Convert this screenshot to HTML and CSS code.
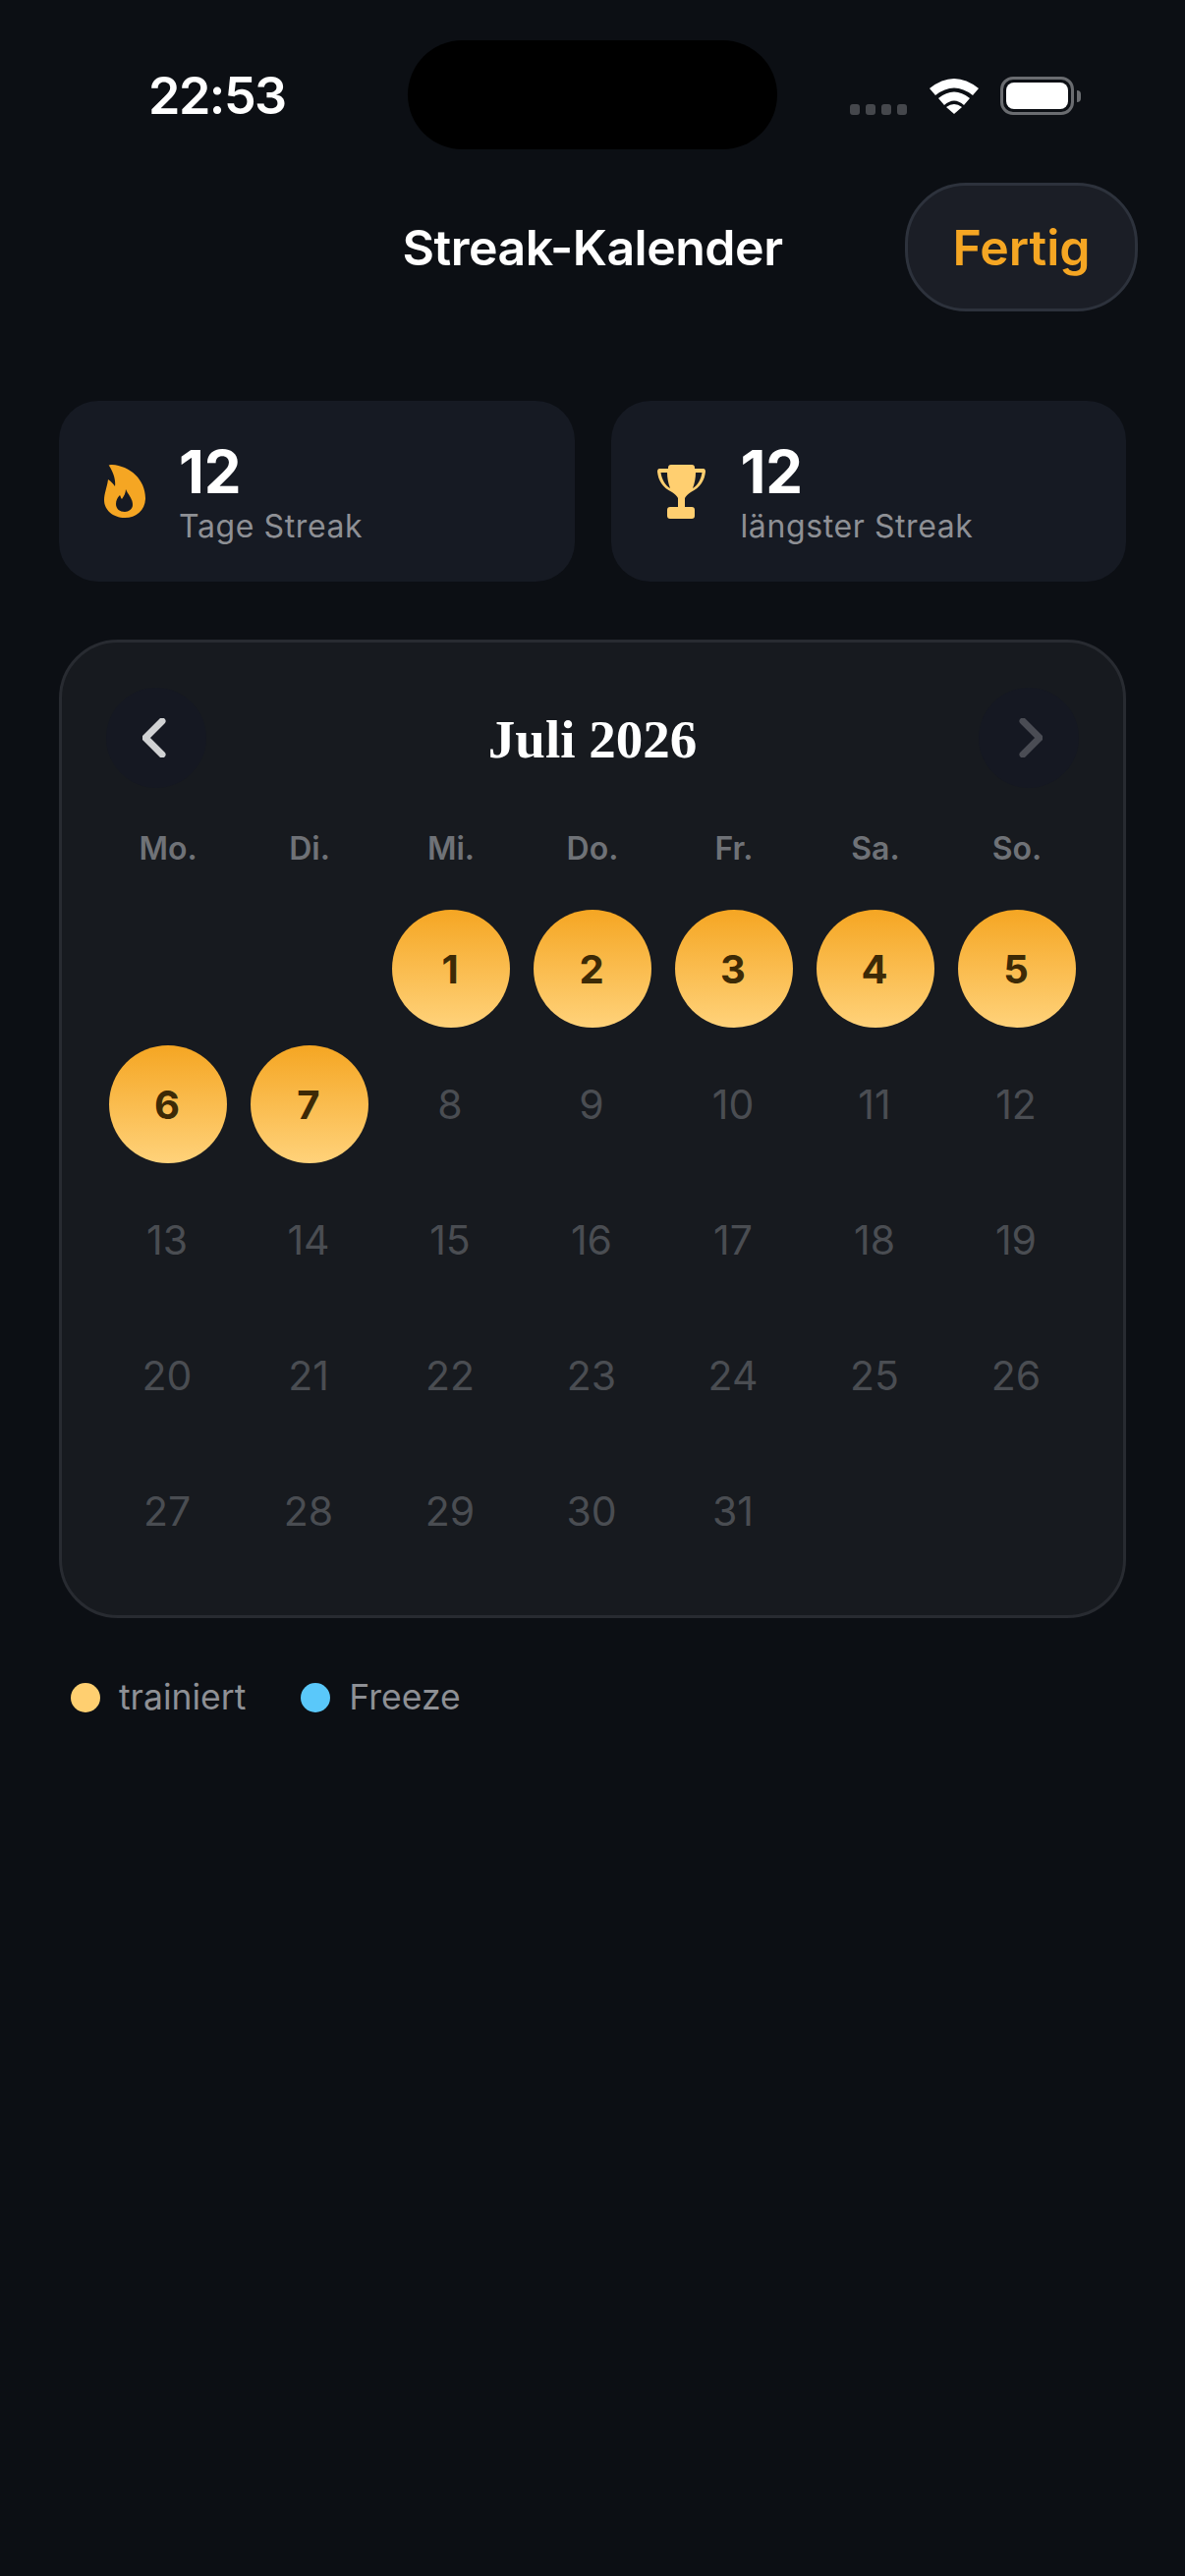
FILE: index.html
```html
<!DOCTYPE html>
<html>
<head>
  <title>Streak-Kalender</title>
  <link rel="stylesheet" href="styles.css">
</head>
<body>
  <div class="status-bar">
    <div class="time">22:53</div>
    <div class="island"></div>
    <div class="status-icons">
      <div class="signal"><span></span><span></span><span></span><span></span></div>
      <svg class="wifi" width="50" height="37" viewBox="0 0 50 37">
        <path d="M0 11 Q25 -9 50 11 L44 18 Q25 3 6 18 Z" fill="#fff"/>
        <path d="M9 21 Q25 8 41 21 L35 28 Q25 19 15 28 Z" fill="#fff"/>
        <path d="M17 30 Q25 24 33 30 L25 37 Z" fill="#fff"/>
      </svg>
      <div class="battery"><div class="battery-fill"></div></div>
      <div class="battery-cap"></div>
    </div>
  </div>

  <div class="header">
    <div></div>
    <h1>Streak-Kalender</h1>
    <button class="done">Fertig</button>
  </div>

  <div class="stats">
    <div class="stat">
      <svg class="stat-icon" width="42" height="54" viewBox="0 0 42 54">
        <path fill-rule="evenodd" fill="#f5a623" d="M5 1 C4 0.500 6 0 8 0 C26 1 42 15 42 34 C42 46 33 54 21 54 C9 54 0 46 0 36 C0 29 3 23 4 15 C7 17 9 19 11 22 C12 15 9 7 5 1 Z M22 25 C24 30 29 34 29 41 C29 45 25 48 21 48 C16 48 12 45 12 40 C12 36 14 33 16 31 C17 33 17 34 18 35 C20 32 22 29 22 25 Z"/>
      </svg>
      <div>
        <div class="stat-value">12</div>
        <div class="stat-label">Tage Streak</div>
      </div>
    </div>
    <div class="stat stat-trophy">
      <svg class="stat-icon" width="49" height="55" viewBox="0 0 49 55">
        <path fill-rule="evenodd" fill="#ffcf70" d="M11 3 C11 1 12 0 14 0 H35 C37 0 38 1 38 3 V4 H47 C48 4 49 5 49 7 C48 16 44 23 34 28 C31 30 29 32 28 34 V43 H35 C37 43 38 44 38 46 V52 C38 54 37 55 35 55 H13 C11 55 10 54 10 52 V46 C10 44 11 43 13 43 H21 V34 C20 32 18 30 15 28 C5 23 1 16 0 7 C0 5 1 4 2 4 H11 Z M3.500 8 C4.500 15 8 21 13 24 C11 19 10 13 10 8 Z M45.500 8 H39 C39 13 38 19 36 24 C41 21 44.500 15 45.500 8 Z"/>
      </svg>
      <div>
        <div class="stat-value">12</div>
        <div class="stat-label">längster Streak</div>
      </div>
    </div>
  </div>

  <div class="calendar">
    <div class="cal-head">
      <div class="nav">
        <svg width="28" height="40" viewBox="0 0 28 40"><path d="M20 3 L3 20 L20 37" fill="none" stroke="#d0d1d3" stroke-width="7" stroke-linecap="round" stroke-linejoin="round"/></svg>
      </div>
      <div class="month">Juli 2026</div>
      <div class="nav">
        <svg width="28" height="40" viewBox="0 0 28 40"><path d="M8 3 L25 20 L8 37" fill="none" stroke="#4a4c54" stroke-width="7" stroke-linecap="round" stroke-linejoin="round"/></svg>
      </div>
    </div>

    <div class="weekdays">
      <div>Mo.</div><div>Di.</div><div>Mi.</div><div>Do.</div><div>Fr.</div><div>Sa.</div><div>So.</div>
    </div>

    <div class="days">
      <div class="day"></div>
      <div class="day"></div>
      <div class="day on">1</div>
      <div class="day on">2</div>
      <div class="day on">3</div>
      <div class="day on">4</div>
      <div class="day on">5</div>
      <div class="day on">6</div>
      <div class="day on">7</div>
      <div class="day">8</div>
      <div class="day">9</div>
      <div class="day">10</div>
      <div class="day">11</div>
      <div class="day">12</div>
      <div class="day">13</div>
      <div class="day">14</div>
      <div class="day">15</div>
      <div class="day">16</div>
      <div class="day">17</div>
      <div class="day">18</div>
      <div class="day">19</div>
      <div class="day">20</div>
      <div class="day">21</div>
      <div class="day">22</div>
      <div class="day">23</div>
      <div class="day">24</div>
      <div class="day">25</div>
      <div class="day">26</div>
      <div class="day">27</div>
      <div class="day">28</div>
      <div class="day">29</div>
      <div class="day">30</div>
      <div class="day">31</div>
    </div>
  </div>

  <div class="legend">
    <div class="legend-item"><span class="dot trained"></span>trainiert</div>
    <div class="legend-item"><span class="dot freeze"></span>Freeze</div>
  </div>
</body>
</html>
```

FILE: styles.css
```css
html {
  background-color: #0c0f14;
}
body {
  font-family: Inter, "Liberation Sans", sans-serif;
  margin: 0;
  padding: 0;
  height: 2622px;
  overflow: hidden;
  background-color: #0c0f14;
  color: #fff;
}
.status-bar {
  display: flex;
  align-items: center;
  justify-content: space-between;
  height: 111px;
  padding: 41px 0 0 0;
}
.time {
  width: 415px;
  box-sizing: border-box;
  padding-left: 151px;
  padding-top: 1px;
  font-size: 52px;
  font-weight: 600;
  letter-spacing: -1.500px;
}
.island {
  width: 376px;
  height: 111px;
  border-radius: 56px;
  background-color: #000;
}
.status-icons {
  flex: 1;
  display: flex;
  align-items: center;
  padding-left: 74px;
  padding-top: 2px;
}
.signal {
  display: flex;
  gap: 6px;
  margin-top: 27px;
  margin-right: 23px;
}
.signal span {
  width: 10px;
  height: 11px;
  border-radius: 3px;
  background-color: #45474c;
}
.wifi {
  margin-right: 22px;
}
.battery {
  box-sizing: border-box;
  width: 75px;
  height: 39px;
  padding: 3px;
  border: 3px solid #6a6c70;
  border-radius: 13px;
}
.battery-fill {
  height: 100%;
  background-color: #fff;
  border-radius: 8px;
}
.battery-cap {
  width: 4px;
  height: 12px;
  margin-left: 3px;
  background-color: #6a6c70;
  border-radius: 0 4px 4px 0;
}
.header {
  display: grid;
  grid-template-columns: 1fr auto 1fr;
  align-items: center;
  margin-top: 34px;
  padding-right: 48px;
  padding-left: 48px;
}
h1 {
  margin: 0;
  padding-top: 1px;
  font-size: 50px;
  font-weight: 600;
  letter-spacing: -0.500px;
}
.done {
  justify-self: end;
  box-sizing: border-box;
  width: 237px;
  height: 131px;
  padding: 0;
  border: 3px solid #2d323c;
  border-radius: 62px;
  background-color: #1b1e26;
  color: #f5a623;
  font-family: inherit;
  font-size: 50px;
  font-weight: 600;
}
.stats {
  display: grid;
  grid-template-columns: 1fr 1fr;
  gap: 37px;
  margin: 91px 60px 0;
}
.stat {
  display: flex;
  align-items: center;
  gap: 34px;
  height: 184px;
  padding-left: 46px;
  border-radius: 40px;
  background-color: #161a23;
}
.stat-trophy {
  gap: 36px;
  padding-left: 47px;
}
.stat-value {
  font-size: 60px;
  font-weight: 700;
  line-height: 72px;
}
.stat-label {
  font-size: 32px;
  line-height: 40px;
  letter-spacing: 0.600px;
  color: #8e9095;
}
.calendar {
  box-sizing: border-box;
  height: 996px;
  margin: 59px 60px 0;
  padding: 46px 45px 45px;
  border: 3px solid #282b31;
  border-radius: 60px;
  background-color: #171a1f;
}
.cal-head {
  display: flex;
  align-items: center;
  justify-content: space-between;
}
.nav {
  display: flex;
  align-items: center;
  justify-content: center;
  width: 102px;
  height: 102px;
  border-radius: 50%;
  background-color: #151822;
}
.month {
  padding-top: 2px;
  font-family: "Liberation Serif", serif;
  font-size: 55px;
  font-weight: 700;
}
.weekdays,
.days {
  display: grid;
  grid-template-columns: repeat(7, 120px);
  column-gap: 24px;
  justify-content: center;
}
.weekdays {
  margin-top: 40px;
  font-size: 32px;
  font-weight: 600;
  line-height: 44px;
  text-align: center;
  color: #6f7277;
}
.days {
  grid-auto-rows: 120px;
  row-gap: 18px;
  margin-top: 40px;
}
.day {
  display: flex;
  align-items: center;
  justify-content: center;
  padding-right: 2px;
  box-sizing: border-box;
  border-radius: 50%;
  font-size: 41px;
  color: #4a4d52;
}
.day.on {
  background: linear-gradient(#f5a623, #ffd27a);
  color: #3d2a06;
  font-size: 40px;
  font-weight: 700;
}
.legend {
  display: flex;
  gap: 56px;
  margin: 59px 72px 0;
  font-size: 35.500px;
  color: #8e9095;
}
.legend-item {
  display: flex;
  align-items: center;
  gap: 19px;
}
.dot {
  width: 30px;
  height: 30px;
  border-radius: 50%;
}
.trained {
  background-color: #ffcf70;
}
.freeze {
  background-color: #5ac8fa;
}
```
